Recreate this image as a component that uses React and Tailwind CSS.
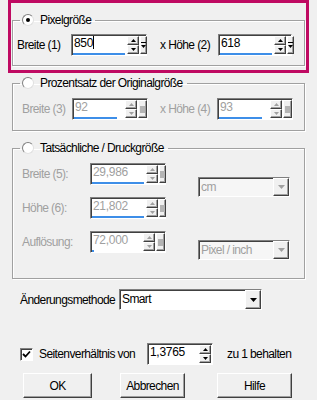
import React from 'react';

const raised =
  'bg-[#f0f0f0] border border-t-white border-l-white border-b-[#404040] border-r-[#404040] shadow-[inset_-1px_-1px_0_#a0a0a0]';
const sunken =
  'border border-t-[#808080] border-l-[#808080] border-b-white border-r-white shadow-[inset_1px_1px_0_#404040]';

function Radio({ checked }) {
  return (
    <span className="w-[12px] h-[12px] rounded-full bg-white border border-t-[#808080] border-l-[#808080] border-b-[#e0e0e0] border-r-[#e0e0e0] flex items-center justify-center shrink-0">
      {checked && <span className="w-[4px] h-[4px] rounded-full bg-black" />}
    </span>
  );
}

function Tri({ up, color }) {
  return (
    <svg width="5" height="3" viewBox="0 0 5 3">
      <polygon points={up ? '0,3 5,3 2.5,0' : '0,0 5,0 2.5,3'} fill={color} />
    </svg>
  );
}

function Spin({ disabled }) {
  const c = disabled ? '#a0a0a0' : '#000';
  return (
    <div className="flex flex-col ml-[2px]">
      <div className={`w-[12px] h-[9px] flex items-center justify-center ${raised}`}>
        <Tri up color={c} />
      </div>
      <div className={`w-[12px] h-[9px] flex items-center justify-center ${raised}`}>
        <Tri color={c} />
      </div>
    </div>
  );
}

function MaxBtn({ disabled }) {
  return (
    <div className={`w-[9px] h-[18px] ml-[1px] flex items-center justify-center ${raised}`}>
      {disabled ? (
        <span className="w-[5px] h-[7px] bg-[#b4b4b4]" />
      ) : (
        <svg width="5" height="7" viewBox="0 0 5 7">
          <rect x="0" y="0" width="5" height="1" fill="#000" />
          <polygon points="0,3 5,3 2.5,6" fill="#000" />
        </svg>
      )}
    </div>
  );
}

function Field({ value, disabled, line = 'w-full', className = '', max = true }) {
  return (
    <div className={`flex items-center h-[22px] bg-white ${sunken} ${className}`}>
      <div className="flex-1 h-full flex flex-col justify-between pl-[2px] pt-[1px]">
        <span className={`leading-[15px] tracking-[-0.3px] ${disabled ? 'text-[#a0a0a0]' : 'text-black'}`}>{value}</span>
        <span className={`h-[2px] bg-[#3d8ee8] -ml-[1px] ${line}`} />
      </div>
      <Spin disabled={disabled} />
      {max ? <MaxBtn disabled={disabled} /> : <span className="w-[1px]" />}
    </div>
  );
}

function Combo({ value, disabled, className = '' }) {
  return (
    <div className={`flex items-center justify-between ${disabled ? 'bg-[#f6f6f6]' : 'bg-white'} ${sunken} ${className}`}>
      <span className={`pl-[2px] leading-[15px] ${disabled ? 'text-[#a0a0a0]' : 'text-black'}`}>{value}</span>
      <div className={`w-[16px] h-full flex items-center justify-center ${raised}`}>
        <svg width="7" height="4" viewBox="0 0 7 4">
          <polygon points="0,0 7,0 3.5,4" fill={disabled ? '#a0a0a0' : '#000'} />
        </svg>
      </div>
    </div>
  );
}

const group =
  'border border-[#a0a0a0] shadow-[inset_1px_1px_0_#fff,1px_1px_0_#fff] px-[4px] min-w-0';

function Legend({ children, checked }) {
  return (
    <legend className="ml-[3px] px-[2px] h-[14px] flex items-center gap-[6px]">
      <Radio checked={checked} />
      <span className="leading-[14px] pr-[2px]">{children}</span>
    </legend>
  );
}

export default function App() {
  return (
    <div className="w-[317px] h-[400px] bg-[#f0f0f0] overflow-hidden text-[12px] tracking-[-0.6px] text-black font-['Liberation_Sans',Arial,sans-serif]">
      <div className="mx-[8px] border-[3px] border-[#bf0a62] pt-[10px] pb-[4px] pl-[1px] pr-[1px]">
        <fieldset className={`${group} pb-[9px]`}>
          <Legend checked>Pixelgröße</Legend>
          <div className="flex items-center mt-[7px]">
            <span className="w-[54px]">Breite (1)</span>
            <Field value={<>850<span className="inline-block w-[1px] h-[13px] bg-black align-[-2px]" /></>} className="w-[76px]" line="w-[52px]" />
            <span className="ml-[13px] w-[58px]">x Höhe (2)</span>
            <Field value="618" className="w-[74px]" line="w-[52px]" />
          </div>
        </fieldset>
      </div>

      <fieldset className={`${group} mx-[12px] mt-[3px] pb-[10px]`}>
        <Legend>Prozentsatz der Originalgröße</Legend>
        <div className="flex items-center mt-[8px] text-[#a0a0a0]">
          <span className="ml-[5px] w-[50px]">Breite (3)</span>
          <Field value="92" disabled className="w-[76px]" line="w-[43px]" />
          <span className="ml-[12px] w-[57px]">x Höhe (4)</span>
          <Field value="93" disabled className="w-[76px]" line="w-[43px]" />
        </div>
      </fieldset>

      <fieldset className={`${group} mx-[12px] mt-[10px] pb-[18px]`}>
        <Legend>Tatsächliche / Druckgröße</Legend>
        <div className="flex mt-[8px]">
          <div className="flex flex-col gap-[12px] text-[#a0a0a0]">
            <div className="flex items-center">
              <span className="ml-[5px] w-[68px]">Breite (5):</span>
              <Field value="29,986" disabled className="w-[76px]" line="w-[52px]" />
            </div>
            <div className="flex items-center">
              <span className="ml-[5px] w-[68px]">Höhe (6):</span>
              <Field value="21,802" disabled className="w-[76px]" line="w-[52px]" />
            </div>
            <div className="flex items-center">
              <span className="ml-[5px] w-[68px]">Auflösung:</span>
              <Field value="72,000" disabled className="w-[76px]" line="w-[2px]" />
            </div>
          </div>
          <div className="flex flex-col ml-[32px] mt-[14px]">
            <Combo value="cm" disabled className="w-[92px] h-[20px]" />
            <Combo value="Pixel / inch" disabled className="w-[92px] h-[20px] mt-[43px]" />
          </div>
        </div>
      </fieldset>

      <div className="flex items-center mt-[10px] ml-[20px]">
        <span className="w-[99px]">Änderungsmethode</span>
        <Combo value="Smart" className="w-[143px] h-[21px]" />
      </div>

      <div className="flex items-center mt-[33px] ml-[20px]">
        <span className={`w-[13px] h-[13px] bg-white flex items-center justify-center ${sunken}`}>
          <svg width="9" height="9" viewBox="0 0 9 9">
            <path d="M1 4 L3.5 6.5 L8 1.5" stroke="#000" strokeWidth="1.8" fill="none" />
          </svg>
        </span>
        <span className="ml-[6px] w-[108px]">Seitenverhältnis von</span>
        <Field value="1,3765" className="w-[66px] h-[19px]" line="w-0" max={false} />
        <span className="ml-[14px]">zu 1 behalten</span>
      </div>

      <div className="flex items-center mt-[8px] ml-[23px]">
        <button className={`w-[69px] h-[25px] ${raised}`}>OK</button>
        <button className={`ml-[28px] w-[65px] h-[25px] ${raised}`}>Abbrechen</button>
        <button className={`ml-[32px] w-[75px] h-[25px] ${raised}`}>Hilfe</button>
      </div>
    </div>
  );
}
